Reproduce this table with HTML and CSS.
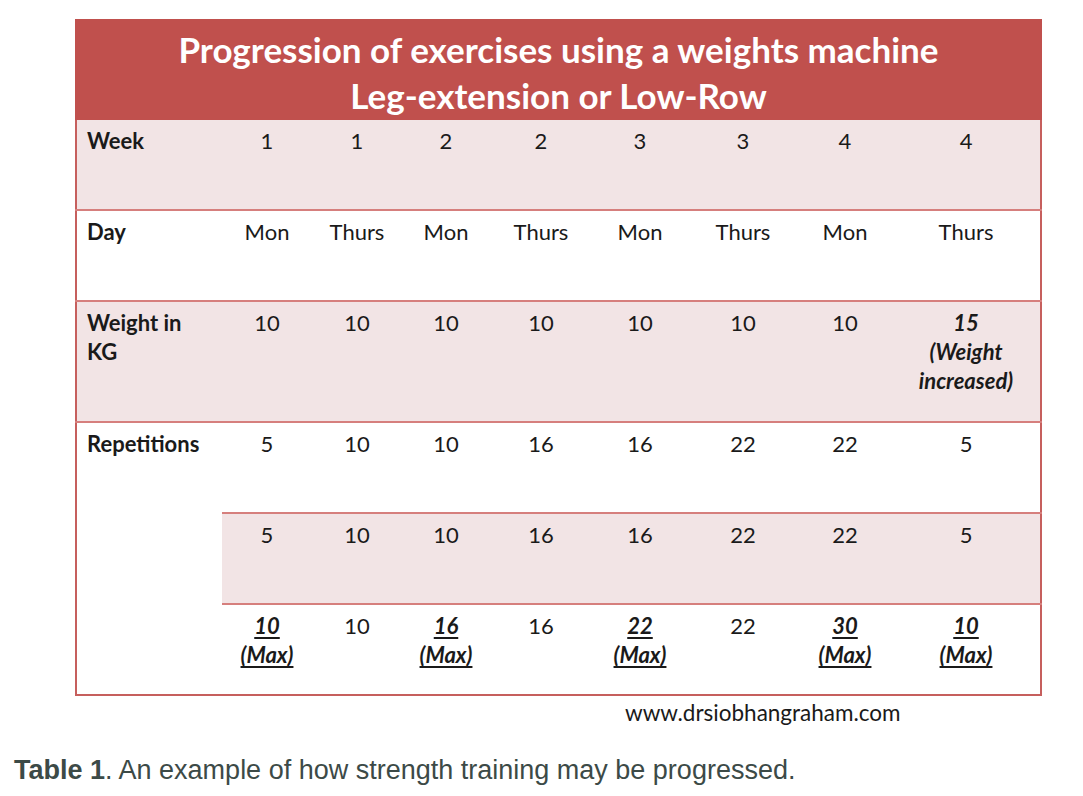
FILE: index.html
```html
<!DOCTYPE html>
<html>
<head>
<meta charset="utf-8">
<link rel="stylesheet" href="styles.css">
</head>
<body>
<div class="page">
  <div class="figure">
    <table class="prog">
      <colgroup>
        <col class="c-label">
        <col class="c1"><col class="c2"><col class="c3"><col class="c4">
        <col class="c5"><col class="c6"><col class="c7"><col class="c8">
      </colgroup>
      <thead>
        <tr>
          <th colspan="9" class="title">Progression of exercises using a weights machine<br>Leg-extension or Low-Row</th>
        </tr>
      </thead>
      <tbody>
        <tr class="pink r91">
          <th class="label">Week</th>
          <td>1</td><td>1</td><td>2</td><td>2</td><td>3</td><td>3</td><td>4</td><td>4</td>
        </tr>
        <tr class="r91">
          <th class="label">Day</th>
          <td>Mon</td><td>Thurs</td><td>Mon</td><td>Thurs</td><td>Mon</td><td>Thurs</td><td>Mon</td><td>Thurs</td>
        </tr>
        <tr class="pink r121">
          <th class="label">Weight in<br>KG</th>
          <td>10</td><td>10</td><td>10</td><td>10</td><td>10</td><td>10</td><td>10</td>
          <td class="bi">15<br>(Weight<br>increased)</td>
        </tr>
        <tr class="r91">
          <th class="label white" rowspan="3">Repetitions</th>
          <td>5</td><td>10</td><td>10</td><td>16</td><td>16</td><td>22</td><td>22</td><td>5</td>
        </tr>
        <tr class="pink r91">
          <td>5</td><td>10</td><td>10</td><td>16</td><td>16</td><td>22</td><td>22</td><td>5</td>
        </tr>
        <tr class="r91 last">
          <td class="max">10<br>(Max)</td><td>10</td>
          <td class="max">16<br>(Max)</td><td>16</td>
          <td class="max">22<br>(Max)</td><td>22</td>
          <td class="max">30<br>(Max)</td>
          <td class="max">10<br>(Max)</td>
        </tr>
      </tbody>
    </table>
    <div class="credit">www.drsiobhangraham.com</div>
  </div>
  <p class="caption"><b>Table 1</b>. An example of how strength training may be progressed.</p>
</div>
</body>
</html>
```

FILE: styles.css
```css
html, body {
  margin: 0;
  padding: 0;
  background: #ffffff;
}
.page {
  width: 1083px;
  height: 796px;
  padding-top: 19px;
  box-sizing: border-box;
}
.figure {
  margin-left: 75px;
  width: 965px;
}
.prog {
  width: 965px;
  table-layout: fixed;
  border-collapse: collapse;
  font-family: Lato, "Open Sans", sans-serif;
  font-size: 22px;
  color: #1a1a1a;
  border: 2px solid #c65f5d;
}
.c-label { width: 146px; }
.c1 { width: 90px; }
.c2 { width: 90px; }
.c3 { width: 88px; }
.c4 { width: 102px; }
.c5 { width: 96px; }
.c6 { width: 110px; }
.c7 { width: 94px; }
.c8 { width: 149px; }

.title {
  background: #c0504d;
  color: #ffffff;
  font-size: 35px;
  font-weight: 700;
  line-height: 46px;
  height: 99px;
  padding: 5px 0 0;
  box-sizing: border-box;
  vertical-align: top;
  text-align: center;
  border: 2px solid #c0504d;
}
.prog td, .prog th.label {
  vertical-align: top;
  padding: 6px 0 0;
  line-height: 29px;
  border-top: 2px solid #d67f7d;
}
.prog td {
  text-align: center;
  font-weight: 400;
}
.prog th.label {
  text-align: left;
  padding-left: 10px;
  font-weight: 700;
}
.pink td, .pink th.label {
  background: #f2e4e5;
}
.prog th.label.white {
  background: #ffffff;
}
.r91 { height: 91px; }
.r121 { height: 121px; }
.bi {
  font-weight: 700 !important;
  font-style: italic;
}
.max {
  font-weight: 700 !important;
  font-style: italic;
  text-decoration: underline;
  text-decoration-thickness: 2px;
  text-underline-offset: 3px;
}
.credit {
  font-family: Lato, "Open Sans", sans-serif;
  font-size: 22.5px;
  color: #1a1a1a;
  margin-left: 550px;
  margin-top: 3px;
  line-height: 28px;
}
.caption {
  margin: 28px 0 0 14px;
  font-family: "Liberation Sans", Arial, sans-serif;
  font-size: 27px;
  color: #3c4a47;
  line-height: 30px;
}
.caption b {
  font-weight: 700;
}
```
